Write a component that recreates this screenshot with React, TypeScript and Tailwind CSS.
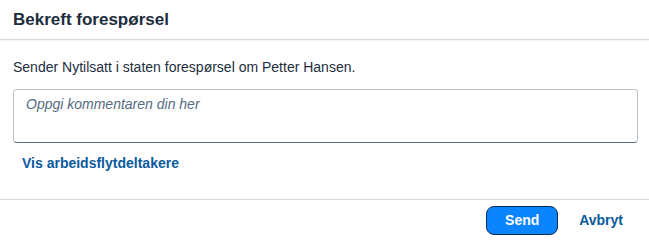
export default function App() {
  return (
    <div className="w-[649px] h-[240px] bg-white flex flex-col text-[#1d2d3e]" style={{ fontFamily: '"Liberation Sans", Arial, sans-serif' }}>
      {/* Header */}
      <header className="h-[40px] flex items-center px-[13px] border-b border-[#d9d9d9] shadow-[0_1px_2px_rgba(0,0,0,0.06)]">
        <h1 className="text-[17px] font-bold text-[#1d2d3e]">Bekreft forespørsel</h1>
      </header>

      {/* Content */}
      <main className="flex-1 px-[13px] pt-[18px]">
        <p className="text-[14px] leading-[18px] text-[#1d2d3e]">
          Sender Nytilsatt i staten forespørsel om Petter Hansen.
        </p>
        <textarea
          className="mt-[13px] w-[625px] h-[54px] resize-none rounded-[4px] border border-[#bcc3ca] border-b-[#556b82] px-[12px] py-[5px] text-[14px] leading-[18px] placeholder:italic placeholder:text-[#556b82] outline-none"
          placeholder="Oppgi kommentaren din her"
        />
        <button className="mt-[3px] ml-[9px] text-[14px] font-bold text-[#0a5a9c]">Vis arbeidsflytdeltakere</button>
      </main>

      {/* Footer */}
      <footer className="h-[41px] border-t border-[#d9d9d9] flex items-center justify-end gap-[12px] pr-[17px]">
        <button className="w-[72px] h-[29px] rounded-[8px] bg-[#0a84ff] border border-[#0b2c4f] text-white text-[14px] font-bold">
          Send
        </button>
        <button className="h-[29px] px-[9px] text-[14px] font-bold text-[#0a5a9c]">Avbryt</button>
      </footer>
    </div>
  )
}
